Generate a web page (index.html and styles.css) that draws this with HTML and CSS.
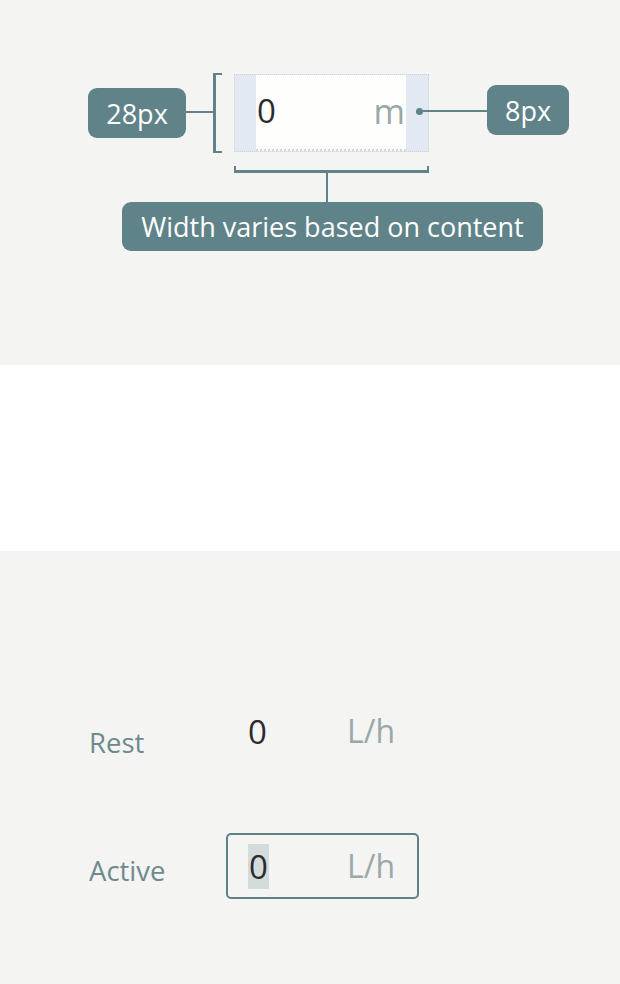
FILE: index.html
```html
<!DOCTYPE html>
<html>
<head>
<meta charset="utf-8">
<link rel="stylesheet" href="styles.css">
</head>
<body>
<section class="panel top">
  <div class="row">
    <div class="badge badge-28">28px</div>
    <div class="hline w27"></div>
    <div class="bracket-left"></div>
    <div class="demo-input">
      <div class="pad pad-l"></div>
      <div class="content">
        <span class="num">0</span>
        <span class="unit">m</span>
      </div>
      <div class="pad pad-r"></div>
    </div>
    <div class="connector">
      <span class="dot"></span>
      <span class="hline w64"></span>
    </div>
    <div class="badge badge-8">8px</div>
  </div>
  <div class="width-note">
    <div class="bracket-bottom"></div>
    <div class="stem"></div>
    <div class="badge badge-wide">Width varies based on content</div>
  </div>
</section>
<section class="panel blank"></section>
<section class="panel states">
  <div class="state state-rest">
    <div class="label">Rest</div>
    <div class="field">
      <span class="num">0</span>
      <span class="unit">L/h</span>
    </div>
  </div>
  <div class="state state-active">
    <div class="label">Active</div>
    <div class="field active">
      <span class="num sel">0</span>
      <span class="unit">L/h</span>
    </div>
  </div>
</section>
</body>
</html>
```

FILE: styles.css
```css
* { box-sizing: border-box; }
html, body { margin: 0; padding: 0; }
body {
  width: 620px;
  font-family: "Open Sans", "Noto Sans", sans-serif;
  background: #f4f4f3;
}
.panel { width: 620px; }
.top {
  height: 365px;
  background: #f4f4f3;
  padding-top: 73px;
}
.row {
  display: flex;
  align-items: center;
  height: 80px;
  margin-left: 88px;
}
.badge {
  background: #5f8388;
  color: #ffffff;
  border-radius: 9px;
  display: flex;
  align-items: center;
  justify-content: center;
  font-size: 27px;
  line-height: 1;
}
.badge-28 { width: 98px; height: 50px; }
.badge-8 { width: 82px; height: 50px; margin-top: -6px; }
.hline { display: block; height: 2px; background: #5f8388; }
.w27 { width: 27px; margin-top: -2px; }
.w64 { width: 64px; }
.bracket-left {
  width: 9px;
  height: 80px;
  border: 3px solid #5f8388;
  border-right: none;
  border-top-width: 2px;
  border-bottom-width: 2px;
  margin-right: 12px;
}
.demo-input {
  display: flex;
  width: 195px;
  height: 78px;
  border: 1px dotted #c9d2dc;
  background: #e3e9f3;
}
.pad-l { width: 21px; }
.pad-r { width: 22px; }
.content {
  flex: 1;
  background: #fefefc;
  border-bottom: 2px dotted #d3d7d7;
  display: flex;
  align-items: center;
  justify-content: space-between;
  padding: 0 1px 3px 1px;
}
.num {
  font-size: 33px;
  color: #2b2b2b;
  line-height: 1;
}
.unit {
  font-size: 32px;
  color: #9aa8a8;
  line-height: 1;
}
.content .unit { font-size: 34px; }
.connector {
  display: flex;
  align-items: center;
  margin-left: -13px;
  margin-top: -4px;
}
.dot {
  width: 7px;
  height: 7px;
  border-radius: 50%;
  background: #5f8388;
}
.width-note {
  width: 421px;
  margin-left: 122px;
  margin-top: 13px;
  display: flex;
  flex-direction: column;
  align-items: center;
}
.bracket-bottom {
  width: 195px;
  height: 7px;
  border: 3px solid #5f8388;
  border-top: none;
  border-left-width: 2px;
  border-right-width: 2px;
  margin-left: -2px;
}
.stem {
  width: 2px;
  height: 29px;
  background: #5f8388;
  margin-left: -11px;
}
.badge-wide {
  width: 421px;
  height: 49px;
}
.blank {
  height: 186px;
  background: #ffffff;
}
.states {
  height: 433px;
  background: #f4f4f3;
  padding-top: 147px;
}
.state {
  display: flex;
  align-items: center;
  margin-left: 89px;
}
.label {
  width: 137px;
  font-size: 27.5px;
  color: #6f8a8e;
  line-height: 1;
}
.state-rest .label { padding-top: 24px; }
.state-active { margin-top: 69px; }
.state-active .label { padding-top: 10px; }
.field {
  width: 193px;
  height: 66px;
  border: 2px solid transparent;
  border-radius: 5px;
  display: flex;
  align-items: center;
  padding-left: 20px;
  padding-right: 22px;
  justify-content: space-between;
}
.field.active { border-color: #5f8085; }
.sel {
  background: #d3dbdb;
  padding: 6px 1px;
}
```
